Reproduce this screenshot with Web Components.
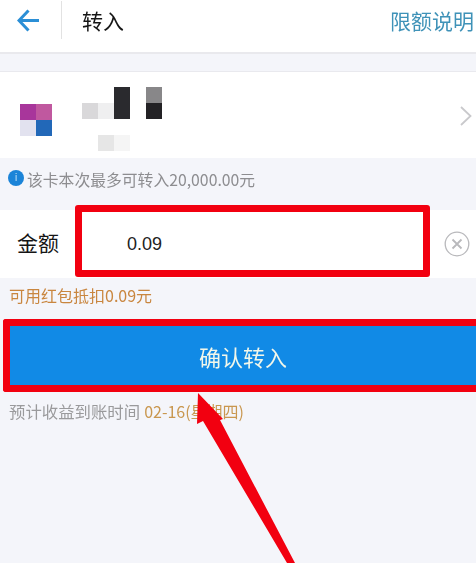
<!DOCTYPE html>
<html lang="zh">
<head>
<meta charset="utf-8">
<title>转入</title>
<style>
  html, body { margin: 0; height: 100%; }
  body {
    background: #f4f5fa;
    font-family: "Noto Sans CJK SC", "Liberation Sans", sans-serif;
    overflow: hidden;
  }
</style>
</head>
<body>
<transfer-page>
  <top-bar title-text="转入" link-text="限额说明"></top-bar>
  <bank-card></bank-card>
  <hint-line icon>该卡本次最多可转入20,000.00元</hint-line>
  <amount-row label="金额" value="0.09"></amount-row>
  <hint-line class="coupon" color="#c9863f">可用红包抵扣0.09元</hint-line>
  <confirm-button>确认转入</confirm-button>
  <arrival-line date="02-16(星期四)">预计收益到账时间</arrival-line>
  <red-arrow></red-arrow>
</transfer-page>

<script>
class TransferPage extends HTMLElement {
  constructor() {
    super();
    this.attachShadow({ mode: 'open' });
    this.shadowRoot.innerHTML = `
      <style>
        :host { display: flex; flex-direction: column; position: relative; width: 476px; height: 563px; overflow: hidden; filter: blur(0.35px); }
      </style>
      <slot></slot>`;
  }
}

class TopBar extends HTMLElement {
  constructor() {
    super();
    this.attachShadow({ mode: 'open' });
  }
  connectedCallback() {
    this.shadowRoot.innerHTML = `
      <style>
        :host { display: flex; align-items: center; height: 52px; box-sizing: content-box; background: #fff; border-bottom: 2px solid #e9e9ed; margin-bottom: 17px; padding: 0; }
        .inner { display: flex; align-items: center; width: 100%; height: 40px; margin-bottom: 12px; }
        svg { width: 22px; height: 23px; margin-left: 17px; flex: none; }
        .sep { width: 1px; height: 38px; background: #e2e2e2; margin: 0 20px 0 22px; flex: none; }
        .title { font-size: 21px; color: #151515; flex: 1; }
        .link { font-size: 21px; color: #3f92b8; margin-right: 2px; }
      </style>
      <div class="inner">
        <svg viewBox="0 0 22 23" fill="none" stroke="#2b8fd6" stroke-width="3" stroke-linejoin="miter">
          <path d="M22 11.5H3M11.5 1.5 2 11.5 11.5 21.5"/>
        </svg>
        <span class="sep"></span>
        <span class="title">${this.getAttribute('title-text')}</span>
        <span class="link">${this.getAttribute('link-text')}</span>
      </div>`;
  }
}

class BankCard extends HTMLElement {
  constructor() {
    super();
    this.attachShadow({ mode: 'open' });
    this.shadowRoot.innerHTML = `
      <style>
        :host { display: flex; height: 87px; background: #fff; border-top: 1px solid #e9e9ee; box-sizing: border-box; position: relative; }
        .logo { display: grid; grid-template-columns: repeat(2, 16px); grid-auto-rows: 16px; margin: 32px 0 0 20px; align-self: flex-start; }
        .name { display: grid; grid-template-columns: repeat(5, 16px); grid-auto-rows: 16px; margin: 15px 0 0 30px; align-self: flex-start; }
        svg { position: absolute; right: 4px; top: 34px; width: 12px; height: 20px; }
      </style>
      <div class="logo">
        <i style="background:#a8369b"></i><i style="background:#c0589f"></i>
        <i style="background:#e2e2ef"></i><i style="background:#2268b8"></i>
      </div>
      <div class="name">
        <i></i><i></i><i style="background:#2a2a2e"></i><i></i><i style="background:#888789"></i>
        <i style="background:#d9d8da"></i><i style="background:#efeff0"></i><i style="background:#2a2a2e"></i><i></i><i style="background:#232225"></i>
        <i></i><i></i><i></i><i></i><i></i>
        <i></i><i style="background:#e6e6e6"></i><i style="background:#f5f5f5"></i><i></i><i></i>
      </div>
      <svg viewBox="0 0 12 20" fill="none" stroke="#c9c9cc" stroke-width="1.8"><path d="M1 1 10.5 10 1 19"/></svg>`;
  }
}

class HintLine extends HTMLElement {
  constructor() {
    super();
    this.attachShadow({ mode: 'open' });
  }
  connectedCallback() {
    const hasIcon = this.hasAttribute('icon');
    const color = this.getAttribute('color') || '#8d8d90';
    this.shadowRoot.innerHTML = `
      <style>
        :host { display: flex; align-items: flex-start; background: #f4f5fa; height: ${hasIcon ? 52 : 41}px; box-sizing: border-box; padding: ${hasIcon ? '11px 0 0 8px' : '6px 0 0 9px'}; color: ${color}; font-size: ${hasIcon ? 15.8 : 16}px; line-height: 22px; }
        .i { width: 16px; height: 16px; border-radius: 50%; background: #1b84d8; color: #bfe0f7; font: 10px/16px "Liberation Sans", sans-serif; text-align: center; margin: 1px 3px 0 0; flex: none; }
      </style>
      ${hasIcon ? '<span class="i">i</span>' : ''}<span><slot></slot></span>`;
  }
}

class AmountRow extends HTMLElement {
  constructor() {
    super();
    this.attachShadow({ mode: 'open' });
  }
  connectedCallback() {
    this.shadowRoot.innerHTML = `
      <style>
        :host { display: flex; align-items: center; height: 68px; background: #fff; position: relative; }
        .label { font-size: 21px; line-height: 28px; color: #151515; margin: 0 0 4px 17px; width: 110px; flex: none; }
        .value { font: 18px "Liberation Sans", Arial, sans-serif; color: #222; flex: 1; }
        .mark { position: absolute; left: 75px; top: -5px; width: 355px; height: 72px; box-sizing: border-box; border: 7px solid #f20010; border-radius: 3px; }
        svg { width: 26px; height: 26px; margin-right: 6px; flex: none; }
      </style>
      <span class="label">${this.getAttribute('label')}</span>
      <span class="value">${this.getAttribute('value')}</span>
      <span class="mark"></span>
      <svg viewBox="0 0 26 26" fill="none" stroke="#b9b9bc">
        <circle cx="13" cy="13" r="11.8" stroke-width="1.3"/>
        <path d="M8.5 8.5 17.5 17.5M17.5 8.5 8.5 17.5" stroke-width="1.8"/>
      </svg>`;
  }
}

class ConfirmButton extends HTMLElement {
  constructor() {
    super();
    this.attachShadow({ mode: 'open' });
    this.shadowRoot.innerHTML = `
      <style>
        :host { display: flex; margin-left: 3px; height: 73px; box-sizing: border-box; border: 7px solid #f20010; border-right: 0; border-radius: 3px 0 0 3px; background: #118ae6; align-items: center; justify-content: center; color: #f2f7ea; font-size: 22px; }
      </style>
      <slot></slot>`;
  }
}

class ArrivalLine extends HTMLElement {
  constructor() {
    super();
    this.attachShadow({ mode: 'open' });
  }
  connectedCallback() {
    this.shadowRoot.innerHTML = `
      <style>
        :host { display: block; padding: 7px 0 0 9px; font-size: 16.4px; line-height: 22px; color: #9a9a9c; }
        b { font: 16px "Noto Sans CJK SC", "Liberation Sans", sans-serif; color: #c9974f; margin-left: 4px; }
      </style>
      <slot></slot><b>${this.getAttribute('date')}</b>`;
  }
}

// annotation drawn over the screenshot, so it sits on the page and not in the flow
class RedArrow extends HTMLElement {
  constructor() {
    super();
    this.attachShadow({ mode: 'open' });
    this.shadowRoot.innerHTML = `
      <style>
        :host { display: block; position: absolute; left: 0; top: 0; width: 476px; height: 563px; pointer-events: none; }
        svg { display: block; }
      </style>
      <svg width="476" height="563" viewBox="0 0 476 563">
        <polygon fill="#f20010" points="198,393 223,419 220,420 295,563 287,563 203,421 197,424"/>
      </svg>`;
  }
}

customElements.define('transfer-page', TransferPage);
customElements.define('top-bar', TopBar);
customElements.define('bank-card', BankCard);
customElements.define('hint-line', HintLine);
customElements.define('amount-row', AmountRow);
customElements.define('confirm-button', ConfirmButton);
customElements.define('arrival-line', ArrivalLine);
customElements.define('red-arrow', RedArrow);
</script>
</body>
</html>
